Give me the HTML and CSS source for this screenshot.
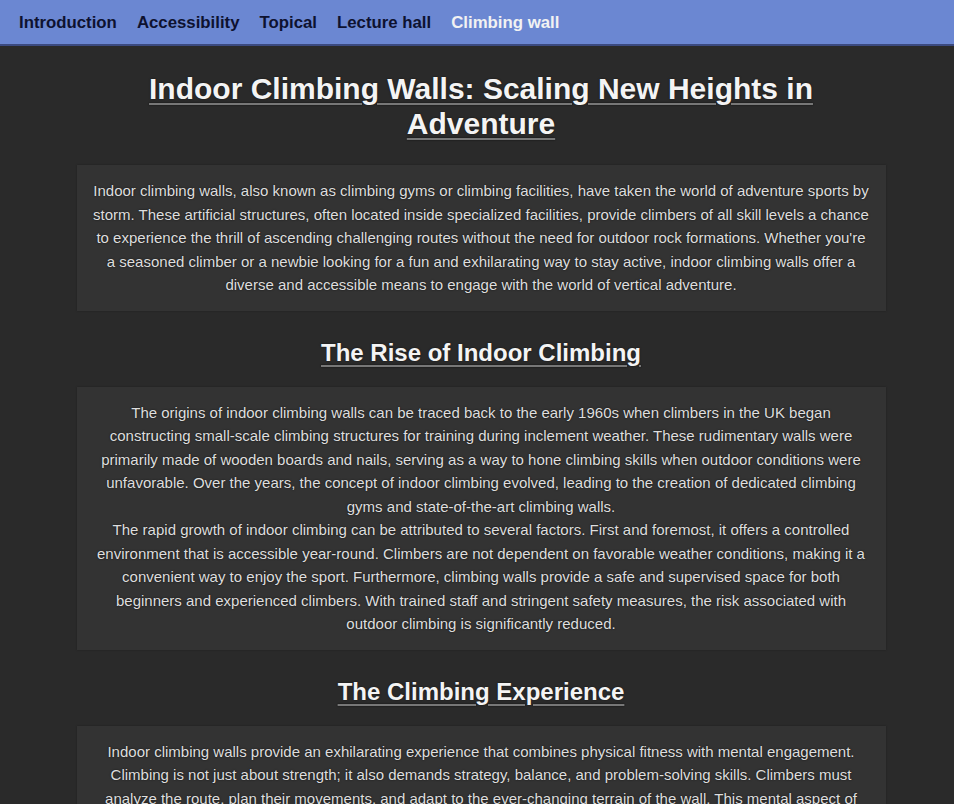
FILE: index.html
```html
<!DOCTYPE html>
<html lang="en">
<head>
<meta charset="utf-8">
<title>Indoor Climbing Walls</title>
<link rel="stylesheet" href="styles.css">
</head>
<body>
<nav class="topnav">
  <a href="#" class="nav-link">Introduction</a>
  <a href="#" class="nav-link">Accessibility</a>
  <a href="#" class="nav-link">Topical</a>
  <a href="#" class="nav-link">Lecture hall</a>
  <a href="#" class="nav-link active">Climbing wall</a>
</nav>
<div class="page">
<main class="content">
  <h1 class="title">Indoor Climbing Walls: Scaling New Heights in Adventure</h1>
  <section class="card">
    <p>Indoor climbing walls, also known as climbing gyms or climbing facilities, have taken the world of adventure sports by storm. These artificial structures, often located inside specialized facilities, provide climbers of all skill levels a chance to experience the thrill of ascending challenging routes without the need for outdoor rock formations. Whether you're a seasoned climber or a newbie looking for a fun and exhilarating way to stay active, indoor climbing walls offer a diverse and accessible means to engage with the world of vertical adventure.</p>
  </section>
  <h2 class="subtitle">The Rise of Indoor Climbing</h2>
  <section class="card">
    <p>The origins of indoor climbing walls can be traced back to the early 1960s when climbers in the UK began constructing small-scale climbing structures for training during inclement weather. These rudimentary walls were primarily made of wooden boards and nails, serving as a way to hone climbing skills when outdoor conditions were unfavorable. Over the years, the concept of indoor climbing evolved, leading to the creation of dedicated climbing gyms and state-of-the-art climbing walls.</p>
    <p>The rapid growth of indoor climbing can be attributed to several factors. First and foremost, it offers a controlled environment that is accessible year-round. Climbers are not dependent on favorable weather conditions, making it a convenient way to enjoy the sport. Furthermore, climbing walls provide a safe and supervised space for both beginners and experienced climbers. With trained staff and stringent safety measures, the risk associated with outdoor climbing is significantly reduced.</p>
  </section>
  <h2 class="subtitle">The Climbing Experience</h2>
  <section class="card">
    <p>Indoor climbing walls provide an exhilarating experience that combines physical fitness with mental engagement. Climbing is not just about strength; it also demands strategy, balance, and problem-solving skills. Climbers must analyze the route, plan their movements, and adapt to the ever-changing terrain of the wall. This mental aspect of climbing makes it a rewarding and engaging activity for people of all ages.</p>
  </section>
</main>
</div>
</body>
</html>
```
FILE: styles.css
```css
html, body {
  margin: 0;
  padding: 0;
}
body {
  background: #2a2a2a;
  color: #dedede;
  font-family: "Liberation Sans", Arial, sans-serif;
}
.topnav {
  display: flex;
  gap: 20px;
  align-items: center;
  height: 44px;
  padding: 1px 19px 0;
  box-sizing: border-box;
  height: 46px;
  background: #6b87d2;
  border-bottom: 2px solid #3b4a80;
}
.nav-link {
  font-size: 16.8px;
  font-weight: bold;
  color: #0e1230;
  text-decoration: none;
}
.nav-link.active {
  color: #f2f2f2;
}
.page {
  padding-left: 8px;
}
.content {
  width: 809px;
  margin: 0 auto;
  padding-bottom: 40px;
}
.title {
  margin: 0;
  padding: 25px 40px 0;
  font-size: 30px;
  line-height: 35px;
  text-align: center;
  color: #f4f4f4;
  text-decoration: underline;
  text-decoration-color: #777;
  text-decoration-thickness: 2px;
  text-underline-offset: 4px;
  text-shadow: 0 0 2px rgba(0,0,0,0.6);
}
.subtitle {
  margin: 26px 0 18px;
  font-size: 24px;
  line-height: 32px;
  text-align: center;
  color: #f4f4f4;
  text-decoration: underline;
  text-decoration-color: #777;
  text-decoration-thickness: 2px;
  text-underline-offset: 4px;
  text-shadow: 0 0 2px rgba(0,0,0,0.6);
}
.card {
  background: #333333;
  padding: 14px 15px;
  margin-top: 24px;
  box-shadow: 0 0 2px rgba(0,0,0,0.25);
}
.subtitle + .card {
  margin-top: 0;
}
.card p {
  margin: 0;
  font-size: 15px;
  line-height: 23.5px;
  text-align: center;
  text-shadow: 0 0 2px rgba(0,0,0,0.7);
}
```
